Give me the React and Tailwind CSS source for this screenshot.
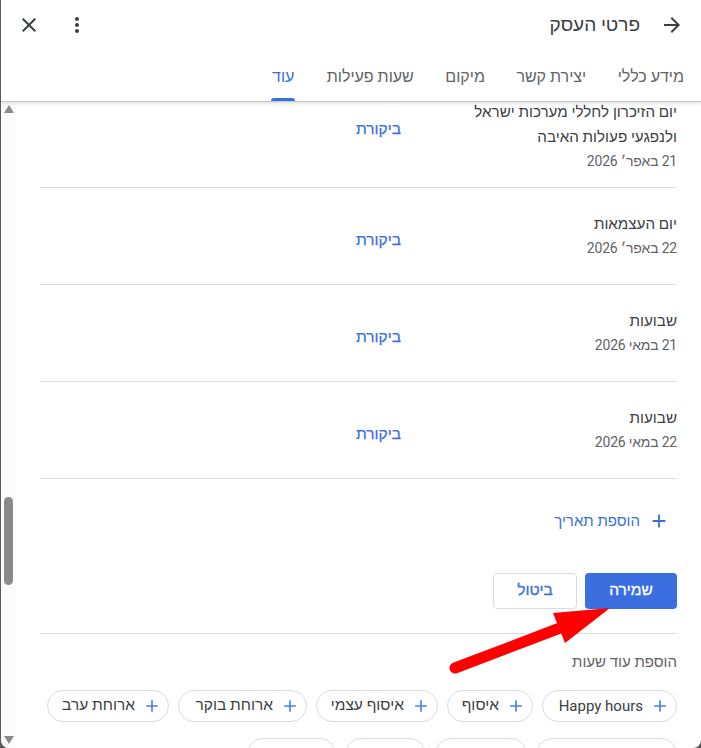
const holidays = [
  { id: 1, name: 'יום הזיכרון לחללי מערכות ישראל ולנפגעי פעולות האיבה', date: '21 באפר׳ 2026' },
  { id: 2, name: 'יום העצמאות', date: '22 באפר׳ 2026' },
  { id: 3, name: 'שבועות', date: '21 במאי 2026' },
  { id: 4, name: 'שבועות', date: '22 במאי 2026' },
]

const tabs = ['מידע כללי', 'יצירת קשר', 'מיקום', 'שעות פעילות', 'עוד']
const hourTypes = [
  { label: 'Happy hours', width: 'w-[135px] text-[15px]' },
  { label: 'איסוף', width: 'w-[86px] text-[15.5px]' },
  { label: 'איסוף עצמי', width: 'w-[122px] text-[15.5px]' },
  { label: 'ארוחת בוקר', width: 'w-[129px] text-[15.5px]' },
  { label: 'ארוחת ערב', width: 'w-[122px] text-[15.5px]' },
]

function Icon({ d, className }) {
  return (
    <svg viewBox="0 0 24 24" fill="currentColor" className={className}>
      <path d={d} />
    </svg>
  )
}

const addPath = 'M19 13h-6v6h-2v-6H5v-2h6V5h2v6h6v2z'

function Chip({ label, width }) {
  return (
    <div className={`flex h-8 shrink-0 items-center gap-[7px] rounded-full border border-[#dadce0] pr-[6px] text-[#3c4043] ${width}`}>
      <Icon d={addPath} className="h-5 w-5 text-[#4f7fe8]" />
      <span>{label}</span>
    </div>
  )
}

export default function App() {
  return (
    <div
      dir="rtl"
      className="h-[748px] w-[701px] overflow-hidden bg-[#5a5a5a] pl-px"
      style={{ fontFamily: 'Roboto, "Liberation Sans", sans-serif' }}
    >
      <div className="flex h-full flex-col overflow-hidden rounded-b-lg bg-white">
        {/* Header */}
        <header className="z-10 h-[102px] shrink-0 border-b border-[#c8c8c8] bg-white shadow-[0_1px_4px_rgba(60,64,67,0.2)]">
          <div className="flex h-[50px] items-center justify-between pr-[17px] pl-4">
            <div className="flex items-center gap-5">
              <Icon d="M12 4l-1.41 1.41L16.17 11H4v2h12.17l-5.58 5.59L12 20l8-8z" className="h-6 w-6 text-[#3c4043]" />
              <h1 className="text-[19px] text-[#3c4043]">פרטי העסק</h1>
            </div>
            <div className="flex items-center gap-6">
              <Icon
                d="M12 8c1.1 0 2-.9 2-2s-.9-2-2-2-2 .9-2 2 .9 2 2 2zm0 2c-1.1 0-2 .9-2 2s.9 2 2 2 2-.9 2-2-.9-2-2-2zm0 6c-1.1 0-2 .9-2 2s.9 2 2 2 2-.9 2-2-.9-2-2-2z"
                className="h-6 w-6 text-[#3c4043]"
              />
              <Icon
                d="M19 6.41L17.59 5 12 10.59 6.41 5 5 6.41 10.59 12 5 17.59 6.41 19 12 13.41 17.59 19 19 17.59 13.41 12z"
                className="h-6 w-6 text-[#3c4043]"
              />
            </div>
          </div>
          <nav className="flex h-[51px] gap-[31.5px] pr-[17px]">
            {tabs.map((tab) => {
              const active = tab === 'עוד'
              return (
                <div
                  key={tab}
                  className={`flex flex-col items-center justify-between pt-[17px] text-base leading-5 ${active ? 'text-[#3b6fe0]' : 'text-[#5f6368]'}`}
                >
                  <span>{tab}</span>
                  {active && <span className="h-[3px] w-6 rounded-t-[3px] bg-[#3b6fe0]" />}
                </div>
              )
            })}
          </nav>
        </header>

        <div className="relative flex min-h-0 flex-1">
          {/* Content */}
          <main className="min-w-0 flex-1 overflow-hidden px-6">
            <div className="-mt-[31px]">
              {holidays.map((h, i) => (
                <div
                  key={h.id}
                  className={`flex items-center border-b border-[#dadce0] ${i === 0 ? 'h-[117px]' : 'h-[97px]'}`}
                >
                  <div className={`w-[276px] shrink-0 ${i === 0 ? 'pt-[15px] pb-[3px]' : 'pb-[3px]'}`}>
                    <div className="w-[225px] text-[15.2px] leading-[25px] text-[#3c4043]">{h.name}</div>
                    <div className="mt-[1px] text-sm leading-5 tracking-[-0.2px] text-[#5f6368]">{h.date}</div>
                  </div>
                  <a className={`text-[15.5px] text-[#3b6fe0] [-webkit-text-stroke:0.25px] ${i === 0 ? 'mt-[2px]' : 'mt-[10px]'}`}>ביקורת</a>
                </div>
              ))}
            </div>

            <div className="mt-[32px] flex h-5 items-center gap-2 pr-[7px] text-[15px] text-[#3b6fe0]">
              <Icon d={addPath} className="h-[22px] w-[22px]" />
              <span>הוספת תאריך</span>
            </div>

            <div className="mt-[42px] flex gap-2">
              <button className="h-9 w-[92px] rounded bg-[#3b6fe0] text-[15.5px] text-white [-webkit-text-stroke:0.3px]">שמירה</button>
              <button className="h-9 w-[84px] rounded border border-[#dadce0] bg-white text-[15.5px] text-[#3b6fe0] [-webkit-text-stroke:0.3px]">ביטול</button>
            </div>

            <div className="mt-6 border-t border-[#dadce0] pt-[18px] text-[15px] leading-5 text-[#5f6368]">הוספת עוד שעות</div>

            <div className="mt-[18px] flex gap-[9px]">
              {hourTypes.map((chip) => (
                <Chip key={chip.label} label={chip.label} width={chip.width} />
              ))}
            </div>
            <div className="mt-4 flex gap-[9px]">
              <div className="h-8 w-[141px] shrink-0 rounded-full border border-[#dadce0]" />
              <div className="h-8 w-[92px] shrink-0 rounded-full border border-[#dadce0]" />
              <div className="h-8 w-[81px] shrink-0 rounded-full border border-[#dadce0]" />
              <div className="h-8 w-[89px] shrink-0 rounded-full border border-[#dadce0]" />
            </div>
          </main>

          {/* Scrollbar */}
          <div className="flex w-[15px] shrink-0 flex-col items-center bg-[#fbfbfb] pt-[3px] pb-[4px]">
            <svg viewBox="0 0 10 8" className="h-2 w-[10px] fill-[#8a8a8a]">
              <path d="M5 0l5 8H0z" />
            </svg>
            <div className="mt-[384px] h-[88px] w-[9px] rounded-full bg-[#8a8a8a]" />
            <svg viewBox="0 0 10 8" className="mt-auto h-2 w-[10px] fill-[#8a8a8a]">
              <path d="M0 0h10L5 8z" />
            </svg>
          </div>

          {/* Red annotation arrow */}
          <svg className="pointer-events-none absolute top-[-102px] left-[-1px] h-[748px] w-[701px]" viewBox="0 0 701 748">
            <path d="M455 668L560 628" stroke="#ff0000" strokeWidth="11" strokeLinecap="round" fill="none" />
            <path d="M610 608L553 613L565 643z" fill="#ff0000" />
          </svg>
        </div>
      </div>
    </div>
  )
}
